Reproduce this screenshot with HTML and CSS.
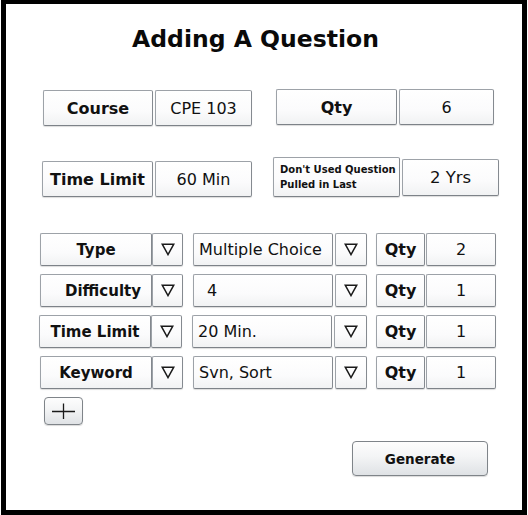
FILE: index.html
```html
<!DOCTYPE html>
<html>
<head>
<meta charset="utf-8">
<link rel="stylesheet" href="styles.css">
</head>
<body>
<div class="frame">
  <h1 class="title">Adding A Question</h1>

  <div class="row row-top">
    <div class="box label w-course mt1">Course</div>
    <div class="box value w-97 mt1 gap2">CPE 103</div>
    <div class="box label w-qty ml24">Qty</div>
    <div class="box value w-95 gap2">6</div>
  </div>

  <div class="row row-second">
    <div class="box label w-tl mt4">Time Limit</div>
    <div class="box value w-97 mt4 gap2">60 Min</div>
    <div class="box note ml21">Don't Used Question<br>Pulled in Last</div>
    <div class="box value w-97 h37 mt2 gap2 big">2 Yrs</div>
  </div>

  <div class="criteria">
    <div class="crit">
      <div class="box clabel">Type</div>
      <div class="box tri"><svg width="14" height="13" viewBox="0 0 14 13"><polygon points="1.2,1.2 12.8,1.2 7,11.6" fill="none" stroke="#1a1a1a" stroke-width="1.5"/></svg></div>
      <div class="box cvalue">Multiple Choice</div>
      <div class="box tri tri2"><svg width="14" height="13" viewBox="0 0 14 13"><polygon points="1.2,1.2 12.8,1.2 7,11.6" fill="none" stroke="#1a1a1a" stroke-width="1.5"/></svg></div>
      <div class="box qlabel">Qty</div>
      <div class="box qvalue">2</div>
    </div>
    <div class="crit">
      <div class="box clabel pl-diff">Difficulty</div>
      <div class="box tri"><svg width="14" height="13" viewBox="0 0 14 13"><polygon points="1.2,1.2 12.8,1.2 7,11.6" fill="none" stroke="#1a1a1a" stroke-width="1.5"/></svg></div>
      <div class="box cvalue pl-four">4</div>
      <div class="box tri tri2"><svg width="14" height="13" viewBox="0 0 14 13"><polygon points="1.2,1.2 12.8,1.2 7,11.6" fill="none" stroke="#1a1a1a" stroke-width="1.5"/></svg></div>
      <div class="box qlabel">Qty</div>
      <div class="box qvalue">1</div>
    </div>
    <div class="crit shift">
      <div class="box clabel">Time Limit</div>
      <div class="box tri"><svg width="14" height="13" viewBox="0 0 14 13"><polygon points="1.2,1.2 12.8,1.2 7,11.6" fill="none" stroke="#1a1a1a" stroke-width="1.5"/></svg></div>
      <div class="box cvalue">20 Min.</div>
      <div class="box tri tri2 wide"><svg width="14" height="13" viewBox="0 0 14 13"><polygon points="1.2,1.2 12.8,1.2 7,11.6" fill="none" stroke="#1a1a1a" stroke-width="1.5"/></svg></div>
      <div class="box qlabel">Qty</div>
      <div class="box qvalue">1</div>
    </div>
    <div class="crit">
      <div class="box clabel">Keyword</div>
      <div class="box tri"><svg width="14" height="13" viewBox="0 0 14 13"><polygon points="1.2,1.2 12.8,1.2 7,11.6" fill="none" stroke="#1a1a1a" stroke-width="1.5"/></svg></div>
      <div class="box cvalue">Svn, Sort</div>
      <div class="box tri tri2"><svg width="14" height="13" viewBox="0 0 14 13"><polygon points="1.2,1.2 12.8,1.2 7,11.6" fill="none" stroke="#1a1a1a" stroke-width="1.5"/></svg></div>
      <div class="box qlabel">Qty</div>
      <div class="box qvalue">1</div>
    </div>
  </div>

  <div class="btn plus"><svg width="25" height="18" viewBox="0 0 25 18"><path d="M1 9.5H24M12.5 1.5V17" stroke="#1a1a1a" stroke-width="1.3" fill="none"/></svg></div>

  <div class="btn generate">Generate</div>
</div>
</body>
</html>
```
FILE: styles.css
```css
* { box-sizing: border-box; }
html, body { margin: 0; padding: 0; background: #fff; }
body { font-family: "DejaVu Sans", Verdana, sans-serif; color: #111; }

.frame {
  margin-left: 1px;
  width: 526px;
  height: 515px;
  border-style: solid;
  border-color: #000;
  border-width: 4px 5px 5px 5px;
  background: #fff;
}

.title {
  margin: 21px 0 0 0;
  height: 28px;
  line-height: 28px;
  font-size: 23.5px;
  font-weight: bold;
  text-align: center;
  padding-right: 17px;
  color: #0a0a0a;
}

.row { display: flex; align-items: flex-start; }
.row-top { margin-top: 36px; padding-left: 37px; height: 37px; }
.row-second { margin-top: 31px; padding-left: 36px; height: 40px; }

.box {
  display: flex;
  align-items: center;
  justify-content: center;
  border: 1px solid #9da2a8;
  border-right-color: #858a90;
  border-bottom-color: #7d8288;
  border-radius: 2px;
  background: linear-gradient(#ffffff, #fbfbfc 60%, #f1f2f3);
  box-shadow: 0 1px 1px rgba(0, 0, 0, 0.14);
  white-space: nowrap;
}

.label { height: 36px; font-weight: bold; font-size: 16px; }
.value { height: 36px; font-size: 16px; }
.big { font-size: 16.5px; }

.w-course { width: 110px; }
.w-tl { width: 111px; }
.w-qty { width: 121px; }
.w-97 { width: 97px; }
.w-95 { width: 95px; }
.h37 { height: 37px; }
.mt1 { margin-top: 1px; }
.mt2 { margin-top: 2px; }
.mt4 { margin-top: 4px; }
.gap2 { margin-left: 2px; }
.ml24 { margin-left: 24px; }
.ml21 { margin-left: 21px; }

.note {
  width: 127px;
  height: 40px;
  justify-content: flex-start;
  padding-left: 6px;
  font-size: 10px;
  font-weight: bold;
  line-height: 15px;
  white-space: normal;
}

.criteria {
  margin-top: 36px;
  display: flex;
  flex-direction: column;
  gap: 8px;
}
.crit { display: flex; height: 33px; padding-left: 34px; }
.crit.shift { padding-left: 33px; }

.crit .box { height: 33px; }
.clabel { width: 112px; font-weight: bold; font-size: 15px; }
.pl-diff { padding-left: 14px; }
.tri { width: 31px; }
.tri svg { display: block; margin-top: -1px; }
.tri2 { width: 32px; margin-left: 2px; }
.tri2.wide { width: 33px; }
.cvalue {
  width: 140px;
  margin-left: 10px;
  justify-content: flex-start;
  padding-left: 5px;
  font-size: 16px;
}
.pl-four { padding-left: 13px; }
.qlabel { width: 49px; margin-left: 9px; font-weight: bold; font-size: 16px; }
.qvalue { width: 70px; margin-left: 1px; font-size: 16px; }

.btn {
  display: flex;
  align-items: center;
  justify-content: center;
  border: 1px solid #7f8489;
  border-radius: 4px;
  background: linear-gradient(#fdfdfd, #f3f4f5 45%, #dfe2e5);
  box-shadow: 0 1px 1px rgba(0, 0, 0, 0.15);
}
.plus { margin-top: 8px; margin-left: 38px; width: 39px; height: 28px; }
.generate {
  margin-top: 16px;
  margin-left: 346px;
  width: 136px;
  height: 35px;
  font-weight: bold;
  font-size: 13.5px;
  color: #111;
}
```
